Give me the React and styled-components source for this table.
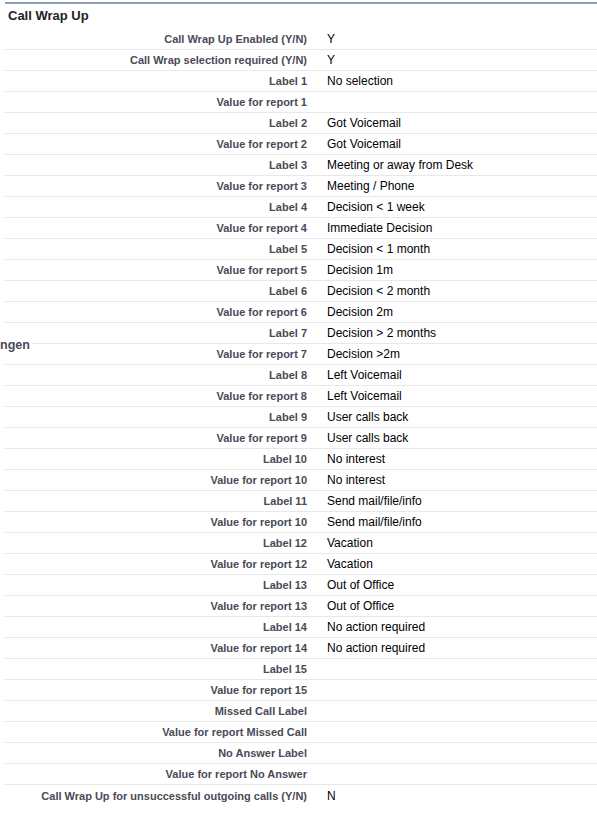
import styled, { createGlobalStyle } from "styled-components";

const GlobalStyle = createGlobalStyle`
  body {
    margin: 0;
    background: #fff;
    font-family: "Liberation Sans", Arial, sans-serif;
  }
`;

const rows = [
  ["Call Wrap Up Enabled (Y/N)", "Y"],
  ["Call Wrap selection required (Y/N)", "Y"],
  ["Label 1", "No selection"],
  ["Value for report 1", ""],
  ["Label 2", "Got Voicemail"],
  ["Value for report 2", "Got Voicemail"],
  ["Label 3", "Meeting or away from Desk"],
  ["Value for report 3", "Meeting / Phone"],
  ["Label 4", "Decision < 1 week"],
  ["Value for report 4", "Immediate Decision"],
  ["Label 5", "Decision < 1 month"],
  ["Value for report 5", "Decision 1m"],
  ["Label 6", "Decision < 2 month"],
  ["Value for report 6", "Decision 2m"],
  ["Label 7", "Decision > 2 months"],
  ["Value for report 7", "Decision >2m"],
  ["Label 8", "Left Voicemail"],
  ["Value for report 8", "Left Voicemail"],
  ["Label 9", "User calls back"],
  ["Value for report 9", "User calls back"],
  ["Label 10", "No interest"],
  ["Value for report 10", "No interest"],
  ["Label 11", "Send mail/file/info"],
  ["Value for report 10", "Send mail/file/info"],
  ["Label 12", "Vacation"],
  ["Value for report 12", "Vacation"],
  ["Label 13", "Out of Office"],
  ["Value for report 13", "Out of Office"],
  ["Label 14", "No action required"],
  ["Value for report 14", "No action required"],
  ["Label 15", ""],
  ["Value for report 15", ""],
  ["Missed Call Label", ""],
  ["Value for report Missed Call", ""],
  ["No Answer Label", ""],
  ["Value for report No Answer", ""],
  ["Call Wrap Up for unsuccessful outgoing calls (Y/N)", "N"],
];

const App = () => {
  return (
    <Page>
      <GlobalStyle />
      <SideLabel>ngen</SideLabel>
      <Section>
        <Header>Call Wrap Up</Header>
        <Table>
          {rows.map(([label, value], i) => (
            <Row key={i} $last={i === rows.length - 1}>
              <LabelCol>{label}</LabelCol>
              <DataCol>{value}</DataCol>
            </Row>
          ))}
        </Table>
      </Section>
    </Page>
  );
};

export default App;

const Page = styled.div`
  position: relative;
  padding: 2px 0 0 5px;
  width: 592px;
`;

const SideLabel = styled.div`
  position: absolute;
  left: 0;
  top: 338px;
  padding-right: 2px;
  background: #fff;
  font-size: 12.5px;
  font-weight: bold;
  color: #4a4a56;
  line-height: 14px;
`;

const Section = styled.section`
  border-top: 2px solid #8e9dbd;
`;

const Header = styled.h3`
  margin: 0;
  height: 25px;
  padding-left: 3px;
  font-size: 13px;
  font-weight: bold;
  color: #222;
  line-height: 24px;
`;

const Table = styled.div`
  display: flex;
  flex-direction: column;
`;

const Row = styled.div`
  display: grid;
  grid-template-columns: 312px 1fr;
  height: 21px;
  box-sizing: border-box;
  border-bottom: ${(p) => (p.$last ? "none" : "1px solid #e8e8e8")};
  align-items: center;
`;

const LabelCol = styled.div`
  text-align: right;
  padding-right: 10px;
  font-size: 11px;
  font-weight: bold;
  color: #4a4a56;
  white-space: nowrap;
`;

const DataCol = styled.div`
  padding-left: 10px;
  font-size: 12px;
  color: #000;
  white-space: nowrap;
`;
